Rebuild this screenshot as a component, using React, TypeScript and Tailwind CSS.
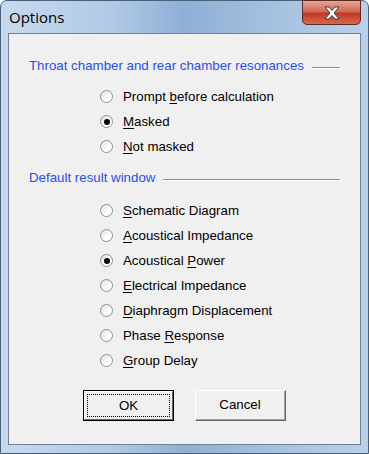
import React from "react";

const ui = { fontFamily: '"Liberation Sans", Arial, sans-serif' };

function Radio({ checked }: { checked?: boolean }) {
  return (
    <span className="relative flex h-[13px] w-[13px] shrink-0 items-center justify-center rounded-full border border-[#8e8f8f] bg-[linear-gradient(135deg,#dcdcdc,#ffffff_60%)]">
      {checked && <span className="h-[6px] w-[6px] rounded-full bg-black" />}
    </span>
  );
}

function Option({ pre = "", u = "", post = "", checked }: { pre?: string; u?: string; post?: string; checked?: boolean }) {
  return (
    <div className="flex h-[25px] items-center gap-[10px] pl-[91px]">
      <Radio checked={checked} />
      <span className="whitespace-nowrap text-[13.3px] text-black">
        {pre}
        <span className="underline underline-offset-2">{u}</span>
        {post}
      </span>
    </div>
  );
}

function GroupHeader({ label }: { label: string }) {
  return (
    <div className="flex h-[20px] items-center pl-[20px] pr-[20px]">
      <span className="shrink-0 whitespace-nowrap text-[13.3px] text-[#2b4ef2]">{label}</span>
      <span className="ml-[8px] mt-[4px] h-[2px] flex-1 border-b border-t border-b-white border-t-[#8c8c8c]" />
    </div>
  );
}

export default function App() {
  return (
    <div className="h-[454px] w-[369px] overflow-hidden bg-white" style={ui}>
      <div className="relative flex h-full w-full flex-col rounded-t-[7px] border border-[#4a5f78] bg-[linear-gradient(90deg,#c6d9ee_0%,#b2cae6_30%,#8fafd6_50%,#a2bede_70%,#b9d0ea_100%)]">
        {/* title bar */}
        <div className="flex h-[32px] shrink-0 items-center pl-[8px]">
          <span className="text-[15px] text-black" style={{ fontFamily: '"Open Sans", "Noto Sans", sans-serif' }}>
            Options
          </span>
        </div>
        <div className="absolute right-[7px] top-[-1px] flex h-[25px] w-[59px] items-center justify-center rounded-b-[5px] border border-[#5b2a22] bg-[linear-gradient(180deg,#e8a596_0%,#d06a55_45%,#c13b22_55%,#d8684c_100%)]">
          <svg width="18" height="14" viewBox="0 0 18 14">
            <path
              d="M2 1 H6 L9 4.5 L12 1 H16 L11 7 L16 13 H12 L9 9.5 L6 13 H2 L7 7 Z"
              fill="#ffffff"
              stroke="#3a3a3a"
              strokeWidth="1"
              strokeLinejoin="round"
            />
          </svg>
        </div>
        {/* client area */}
        <div className="mx-[7px] mb-[8px] flex flex-1 flex-col border border-[#6f8195] bg-[#f0f0f0]">
          <div className="mt-[22px]">
            <GroupHeader label="Throat chamber and rear chamber resonances" />
          </div>
          <div className="mt-[8px]">
            <Option pre="Prompt " u="b" post="efore calculation" />
            <Option u="M" post="asked" checked />
            <Option u="N" post="ot masked" />
          </div>
          <div className="mt-[9px]">
            <GroupHeader label="Default result window" />
          </div>
          <div className="mt-[10px]">
            <Option u="S" post="chematic Diagram" />
            <Option u="A" post="coustical Impedance" />
            <Option pre="Acoustical " u="P" post="ower" checked />
            <Option u="E" post="lectrical Impedance" />
            <Option u="D" post="iaphragm Displacement" />
            <Option pre="Phase " u="R" post="esponse" />
            <Option u="G" post="roup Delay" />
          </div>
          <div className="mt-[17px] flex gap-[21px] pl-[74px]">
            <button className="h-[31px] w-[91px] border border-black bg-[#f0f0f0] p-0">
              <div className="h-full w-full border border-b-[#696969] border-l-white border-r-[#696969] border-t-white p-[2px]">
                <div className="flex h-full w-full items-center justify-center border border-dotted border-black text-[13.3px] text-black">
                  OK
                </div>
              </div>
            </button>
            <button className="h-[31px] w-[91px] border border-b-[#696969] border-l-white border-r-[#696969] border-t-white bg-[#f0f0f0] p-0">
              <div className="flex h-full w-full items-center justify-center border-b border-r border-b-[#a0a0a0] border-r-[#a0a0a0] text-[13.3px] text-black">
                Cancel
              </div>
            </button>
          </div>
        </div>
      </div>
    </div>
  );
}
